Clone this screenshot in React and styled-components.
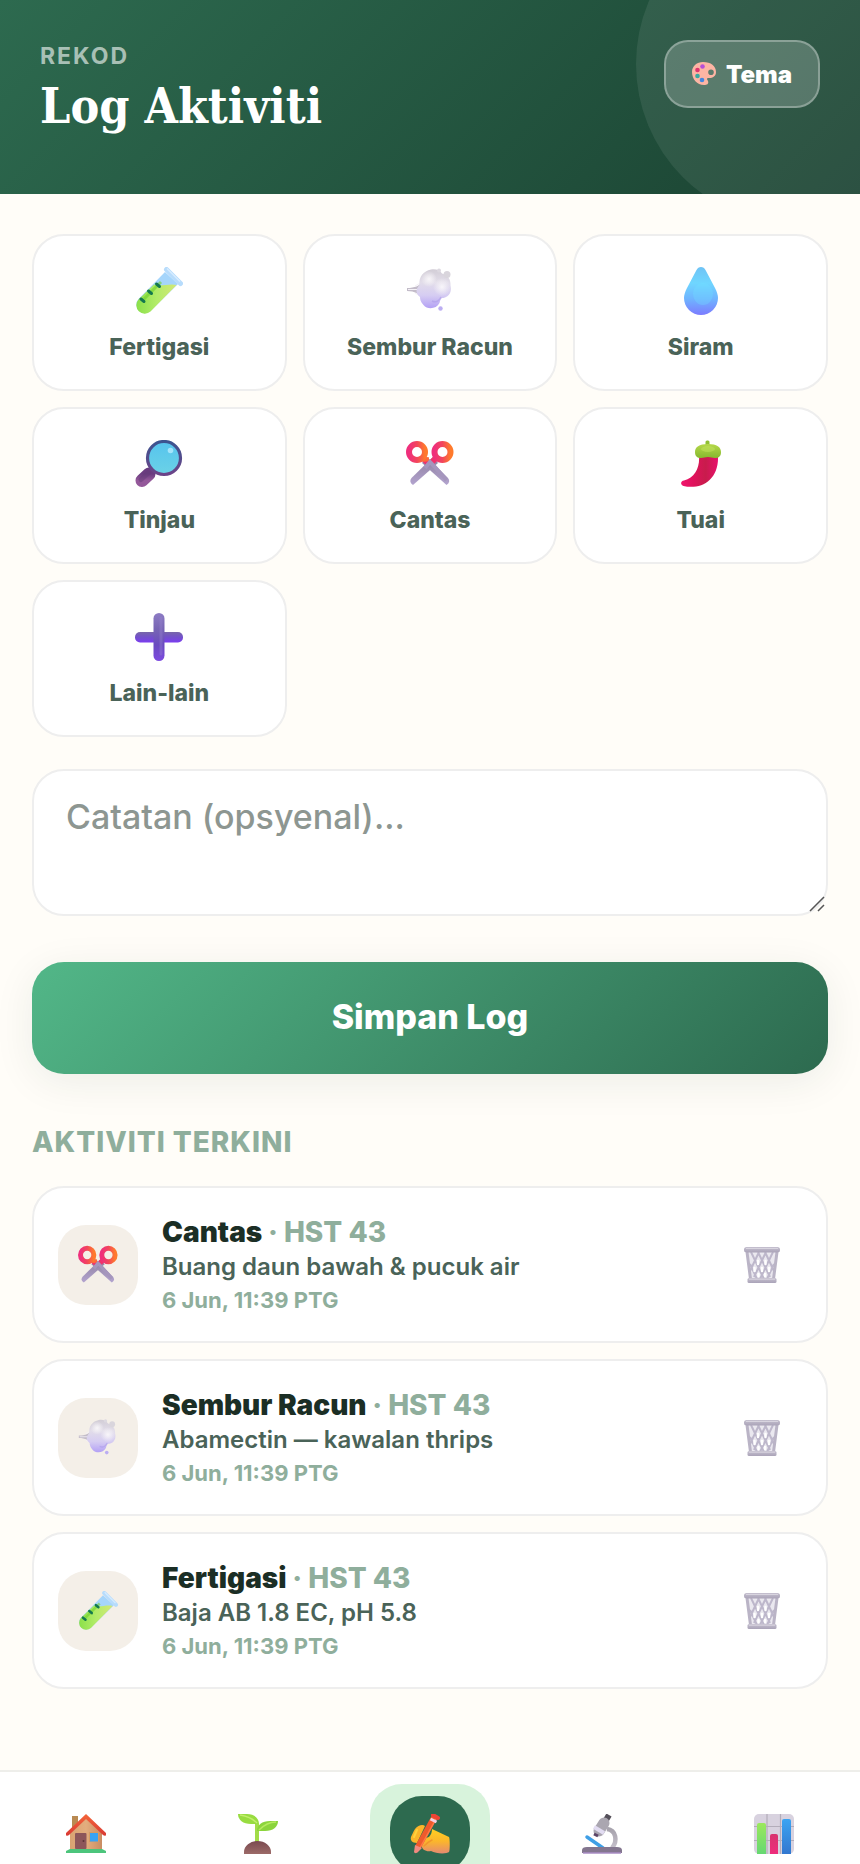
import React, { useState } from "react";
import styled, { createGlobalStyle } from "styled-components";

const GlobalStyle = createGlobalStyle`
  * {
    box-sizing: border-box;
  }
  body {
    margin: 0;
    background: #fffdf8;
    color: #1b2e25;
    font-family: "Inter", "Liberation Sans", sans-serif;
  }
  button,
  textarea {
    font-family: inherit;
  }
  button {
    cursor: pointer;
  }
`;

const Page = styled.div`
  display: flex;
  flex-direction: column;
  min-height: 100vh;
`;

const Header = styled.header`
  position: relative;
  overflow: hidden;
  display: flex;
  justify-content: space-between;
  align-items: flex-start;
  padding: 40px 40px 54px;
  background: linear-gradient(135deg, #2d6a4f, #1b4332);
  color: #ffffff;

  &::before {
    content: "";
    position: absolute;
    top: -96px;
    right: -96px;
    width: 320px;
    height: 320px;
    border-radius: 50%;
    background: rgba(255, 255, 255, 0.08);
  }
`;

const Eyebrow = styled.div`
  font-size: 23px;
  line-height: 32px;
  font-weight: 700;
  letter-spacing: 2px;
  text-transform: uppercase;
  color: rgba(255, 255, 255, 0.6);
`;

const Title = styled.h1`
  margin: 0;
  font-family: "DejaVu Serif Condensed", "DejaVu Serif", serif;
  font-size: 48px;
  line-height: 68px;
  font-weight: 700;
`;

const ThemeButton = styled.button`
  position: relative;
  display: flex;
  align-items: center;
  gap: 10px;
  height: 68px;
  padding: 0 26px;
  border: 2px solid rgba(255, 255, 255, 0.3);
  border-radius: 24px;
  background: rgba(255, 255, 255, 0.2);
  color: #ffffff;
  font-size: 24px;
  font-weight: 900;
`;

const Main = styled.main`
  flex: 1;
  padding: 40px 32px;
`;

const ActivityGrid = styled.div`
  display: grid;
  grid-template-columns: repeat(3, 1fr);
  gap: 16px;
`;

const ActivityButton = styled.button`
  display: flex;
  flex-direction: column;
  align-items: center;
  gap: 18px;
  padding: 31px 16px 28px;
  border: 2px solid ${(props) => (props.$active ? "#2d6a4f" : "#eeeeee")};
  border-radius: 32px;
  background: #ffffff;
  color: #4a6358;
  font-size: 23px;
  line-height: 28px;
  font-weight: 800;
`;

const NoteBox = styled.div`
  position: relative;
  margin-top: 32px;

  & svg {
    position: absolute;
    right: 3px;
    bottom: 4px;
  }
`;

const Note = styled.textarea`
  display: block;
  width: 100%;
  height: 147px;
  padding: 24px 32px;
  border: 2px solid #eeeeee;
  border-radius: 32px;
  background: #ffffff;
  color: #1b2e25;
  font-size: 34px;
  line-height: 44px;
  font-weight: 500;
  resize: none;
  outline: none;

  &::placeholder {
    color: #8d9691;
    opacity: 1;
  }
`;

const SaveButton = styled.button`
  display: block;
  width: 100%;
  height: 112px;
  margin-top: 46px;
  padding: 0 32px 4px;
  border: none;
  border-radius: 32px;
  background: linear-gradient(135deg, #52b788, #2d6a4f);
  box-shadow: 0 8px 40px rgba(27, 46, 37, 0.08);
  color: #ffffff;
  font-size: 34px;
  font-weight: 800;
`;

const SectionTitle = styled.h2`
  margin: 48px 0 24px;
  font-size: 28px;
  line-height: 40px;
  font-weight: 800;
  letter-spacing: 1px;
  text-transform: uppercase;
  color: #8fae9c;
`;

const LogList = styled.ul`
  display: flex;
  flex-direction: column;
  gap: 16px;
  margin: 0;
  padding: 0;
  list-style: none;
`;

const LogCard = styled.li`
  display: flex;
  align-items: center;
  gap: 24px;
  min-height: 157px;
  padding: 16px 24px;
  border: 2px solid #eeeeee;
  border-radius: 32px;
  background: #ffffff;
`;

const LogIcon = styled.div`
  display: flex;
  align-items: center;
  justify-content: center;
  flex-shrink: 0;
  width: 80px;
  height: 80px;
  border-radius: 28px;
  background: #f4efe8;
`;

const LogText = styled.div`
  flex: 1;
  min-width: 0;
`;

const LogName = styled.div`
  font-size: 28px;
  line-height: 36px;
  font-weight: 900;

  & span {
    color: #8fae9c;
    font-weight: 800;
  }
`;

const LogNote = styled.div`
  font-size: 24px;
  line-height: 34px;
  font-weight: 600;
  color: #4a6358;
`;

const LogTime = styled.div`
  font-size: 22px;
  line-height: 32px;
  font-weight: 700;
  color: #8fae9c;
`;

const DeleteButton = styled.button`
  display: flex;
  padding: 22px;
  border: none;
  background: none;
`;

const Nav = styled.nav`
  display: flex;
  flex-shrink: 0;
  height: 94px;
  overflow: hidden;
  padding-top: 12px;
  border-top: 2px solid #eeeeea;
  background: #ffffff;
`;

const NavSlot = styled.div`
  flex: 1;
  display: flex;
  justify-content: center;
  align-items: flex-start;
`;

const NavItem = styled.a`
  padding: 12px 20px 24px;
  border-radius: 32px;
  background: ${(props) => (props.$active ? "#d8f3dc" : "transparent")};
`;

const NavTile = styled.span`
  display: flex;
  align-items: center;
  justify-content: center;
  width: 80px;
  height: 76px;
  border-radius: 32px;
  background: ${(props) => (props.$active ? "#2d6a4f" : "transparent")};
`;

const HiddenSvg = styled.svg`
  position: absolute;
  width: 0;
  height: 0;
`;

const Stops = ({ colors }) =>
  colors.map((color, i) => (
    <stop key={i} offset={i / (colors.length - 1)} stopColor={color} />
  ));

// gradients shared by all the icons
const vertical = {
  gDrop: ["#6fc3f5", "#6fd6ff", "#6fb4ff", "#7c7cff"],
  gPuff: ["#d2cdd6", "#e2dde9", "#d6cdf2", "#b3a0f5"],
  gLens: ["#56c4ee", "#6bd2e6"],
  gRim: ["#3c5490", "#6c4388"],
  gHandle: ["#6b3c80", "#94589a"],
  gBlade: ["#8d7f9e", "#b3a4cf"],
  gStem: ["#b5d84a", "#86b82e"],
  gPlusV: ["#8d7cc4", "#7765b4", "#6a4ac0", "#7d4be0"],
  gPlusH: ["#7766a8", "#7350cc", "#7b3cf0"],
  gBasket: ["#c5c0cf", "#aaa3b8"],
  gRoof: ["#f4663a", "#d93a34"],
  gSoil: ["#7a4a50", "#9c6a68"],
  gArm: ["#a7a3ad", "#c5c0cb"],
  gBlue: ["#3ba4f2", "#3277cf"],
  gGreen: ["#9be85c", "#66d873"],
  gPink: ["#d8346f", "#ee2c7c"],
  gHand: ["#ffcf22", "#fbb62b", "#e58a72"],
};

const horizontal = {
  gRing: ["#ef2f7c", "#f2465c", "#ff7a2c"],
  gWall: ["#d9a272", "#e3ad7e", "#c98d63"],
  gLiquid: ["#8be04a", "#b2ec68", "#d3e876"],
  gChili: ["#f0146c", "#e0125c", "#c81c4c", "#e8106c"],
};

function IconDefs() {
  return (
    <HiddenSvg aria-hidden="true">
      <defs>
        {Object.keys(vertical).map((id) => (
          <linearGradient key={id} id={id} x1="0" y1="0" x2="0" y2="1">
            <Stops colors={vertical[id]} />
          </linearGradient>
        ))}
        {Object.keys(horizontal).map((id) => (
          <linearGradient key={id} id={id} x1="0" y1="0" x2="1" y2="0">
            <Stops colors={horizontal[id]} />
          </linearGradient>
        ))}
        <radialGradient id="gShine">
          <stop offset="0" stopColor="#fbf9fb" stopOpacity=".9" />
          <stop offset="1" stopColor="#fbf9fb" stopOpacity="0" />
        </radialGradient>
      </defs>
    </HiddenSvg>
  );
}

const Icon = ({ size = 48, box = 48, children }) => (
  <svg
    width={size}
    height={size}
    viewBox={`0 0 ${box} ${box}`}
    fill="none"
    aria-hidden="true"
  >
    {children}
  </svg>
);

const FlaskIcon = (props) => (
  <Icon {...props}>
    <path
      d="M30 5 3.500 32a8.500 8.500 0 0 0 12 12L43 17Z"
      fill="#a5d5fb"
    />
    <path
      d="M19 17.500 3.500 32.500a8.500 8.500 0 0 0 12 12L41.500 18c-7-2-15 2-22.500-.5Z"
      fill="url(#gLiquid)"
    />
    <path d="M26 15 9 32" stroke="#6fd02c" strokeWidth="3" opacity=".6" />
    <path
      d="M31.500 2.500 45.500 16.500"
      stroke="#b7dcfc"
      strokeWidth="5"
      strokeLinecap="round"
    />
    <path d="m32 1.500 13 13" stroke="#d6ecff" strokeWidth="1.500" />
    <path
      d="m21.500 17 3 2.500M13.500 24l3 2.500M6 32l3 2.500"
      stroke="#14784f"
      strokeWidth="3"
      strokeLinecap="round"
    />
  </Icon>
);

const PuffIcon = (props) => (
  <Icon {...props}>
    <path
      d="M1 21c8 0 12-2 16-7l5 9-5 9c-4-5-8-8-16-8Z"
      fill="#c3bcc9"
    />
    <path d="M2 22.500h14M9 19l7-4M9 26l7 4" stroke="#f4f1f6" />
    <path
      d="M25 2.500c5-1 9 1 11 4 6 2 9 6 8.500 12 1.500 6-1 11-7 12.500-3 0-3 2-4 5-3 6-12 7-16 2-3-3-3.500-6-3.500-8-5-4-4-8-.5-12-1-8 4-14 11.500-15.500Z"
      fill="url(#gPuff)"
    />
    <circle cx="23" cy="12" r="8" fill="url(#gShine)" />
    <circle cx="36" cy="20" r="9" fill="url(#gShine)" />
    <path
      d="M26 34c4 2 7 0 9-4"
      stroke="#a795e8"
      strokeWidth="1.500"
      opacity=".5"
    />
    <circle cx="41" cy="7.500" r="3.500" fill="#d9d5dc" />
    <circle cx="33" cy="3.500" r="2" fill="#dcd8e0" />
    <circle cx="34.500" cy="41.500" r="2.200" fill="#bcaef2" />
  </Icon>
);

const DropIcon = (props) => (
  <Icon {...props}>
    <path
      d="M24 0c2 0 3.500 1 4.500 3L38 21c2 4 3 7 3 10a17 17 0 0 1-34 0c0-3 1-6 3-10l9.500-18C20.500 1 22 0 24 0Z"
      fill="url(#gDrop)"
    />
    <ellipse cx="26" cy="27" rx="10" ry="11" fill="#6fe0ff" opacity=".3" />
  </Icon>
);

const MagnifierIcon = (props) => (
  <Icon {...props}>
    <path
      d="M14 34 7 40.500"
      stroke="url(#gHandle)"
      strokeWidth="13"
      strokeLinecap="round"
    />
    <path
      d="M13 33 6 39.500"
      stroke="#643a78"
      strokeWidth="5"
      strokeLinecap="round"
      opacity=".5"
    />
    <circle
      cx="29"
      cy="18"
      r="16.500"
      fill="url(#gLens)"
      stroke="url(#gRim)"
      strokeWidth="3.200"
    />
    <circle cx="35.500" cy="10.500" r="2.800" fill="#a4e4fb" />
  </Icon>
);

const ScissorsIcon = (props) => (
  <Icon {...props}>
    <path
      d="M27 17 5.500 38c-2 2.500-1.500 5 1.500 7L32 23Z"
      fill="url(#gBlade)"
    />
    <path d="m21 17 21 21c2 2.500 1.500 5-1.500 7L16 23Z" fill="url(#gBlade)" />
    <path
      d="m17 18 5 5M30 18l-5 5"
      stroke="#f0326c"
      strokeWidth="6"
    />
    <path d="m17 20 6-1" stroke="#ff6a38" strokeWidth="4" />
    <path
      d="M19 28 24 22l4.500 4.500L40.500 40"
      stroke="#a596bd"
      strokeWidth="4"
    />
    <circle cx="11" cy="12" r="8" stroke="url(#gRing)" strokeWidth="6" />
    <circle cx="36.500" cy="12" r="8" stroke="url(#gRing)" strokeWidth="6" />
  </Icon>
);

const ChiliIcon = (props) => (
  <Icon {...props}>
    <path
      d="M22 16c1 11-4 22-15 24.500C3.500 41 3 45 6.500 46 24 50 42 40 41 16Z"
      fill="url(#gChili)"
    />
    <path d="M28.500 7V2c0-2 4-2 4 0v5Z" fill="#8fbf33" />
    <path
      d="M18 12c0-5 4-8 13-8s13 3 13 8c0 4-2 6-6 6-3 0-4-1-7-1s-4 1-7 1c-4 0-6-2-6-6Z"
      fill="url(#gStem)"
    />
    <ellipse cx="31" cy="9" rx="7" ry="3" fill="#c4e35e" opacity=".5" />
  </Icon>
);

const PlusIcon = (props) => (
  <Icon {...props}>
    <rect x="0" y="19" width="48" height="10.500" rx="5" fill="url(#gPlusH)" />
    <rect x="18.500" y="0" width="11" height="48" rx="5.500" fill="url(#gPlusV)" />
    <path
      d="M26 5v36"
      stroke="#9a88d0"
      strokeWidth="3"
      strokeLinecap="round"
      opacity=".35"
    />
  </Icon>
);

const PaletteIcon = () => (
  <Icon size={24} box={24}>
    <path
      fillRule="evenodd"
      d="M11 0c8 0 13 4 13 10 0 4-3 6-7 6-3 0-2 1-1 3 1 3-1 4-4 4C5 23 0 17 0 10 0 4 5 0 11 0Zm8 7.500a2.800 2.800 0 1 0 0 5.600 2.800 2.800 0 0 0 0-5.600Z"
      fill="#fdb5a4"
    />
    <circle cx="5.500" cy="8" r="2.300" fill="#e0336e" />
    <circle cx="10.500" cy="4.500" r="2.300" fill="#b64fd8" />
    <circle cx="5.500" cy="14" r="2.300" fill="#3aa9a0" />
    <circle cx="10" cy="18" r="2.300" fill="#4587e0" />
  </Icon>
);

const BasketIcon = () => (
  <Icon size={36} box={36}>
    <path d="M3 5h30l-3 27H6Z" fill="#d9d5e2" opacity=".55" />
    <path
      d="m7 5 13 27M14 5l12 25M21 5l9 19M6 17l7 15M29 5 16 32M22 5 10 30M15 5 6 24M30 17l-7 15"
      stroke="#bdb7cb"
      strokeWidth="2"
    />
    <path
      d="M14 14v3M21.500 14v3M10.500 21v3M18 21v3M25 21v3M14.500 27v2M21 27v2"
      stroke="#ffffff"
      strokeWidth="2.400"
      strokeLinecap="round"
    />
    <path d="M3 5 6.500 32M33 5l-3.500 27" stroke="#bab4c6" strokeWidth="3" />
    <rect x="0" y="0" width="36" height="5.500" rx="2.500" fill="url(#gBasket)" />
    <path d="M2 1.500h32" stroke="#d8d4df" />
    <rect x="3.500" y="31" width="29" height="5" rx="1.500" fill="url(#gBasket)" />
    <path d="M5 32.200h26" stroke="#d8d4df" />
  </Icon>
);

const HomeIcon = () => (
  <Icon size={40} box={40}>
    <rect x="6" y="2" width="6" height="15" fill="#b98a52" />
    <path d="M4 18 20 3l16 15v18H4Z" fill="url(#gWall)" />
    <path
      d="M20 0 0 19v2c0 1 2 1 3 0L20 5l17 16c1 1 3 1 3 0v-2Z"
      fill="url(#gRoof)"
    />
    <rect x="9" y="19" width="11.500" height="16" rx="1" fill="#8d565a" />
    <circle cx="17.500" cy="27" r="1" fill="#5c3238" />
    <rect x="23" y="18" width="10" height="10" fill="#d79a62" />
    <rect x="24" y="19" width="8" height="8.500" fill="#38a3f5" />
    <path d="M0 39v-2l4-2h32l4 2v2Z" fill="#4cc57c" />
  </Icon>
);

const SeedlingIcon = () => (
  <Icon size={40} box={40}>
    <path
      d="M19 28V10"
      stroke="#a2dc48"
      strokeWidth="4"
    />
    <path d="M0 0h9c7 0 12 4 12 10h-8C5 10 0 6 0 0Z" fill="#98dc40" />
    <path d="M2 1c7 1 12 3 17 8" stroke="#c1ee6c" strokeWidth="1.500" />
    <path d="M40 7h-8c-8 0-13 4-13 10h8c8 0 13-4 13-10Z" fill="#8bd43c" />
    <path d="M38 8c-7 0-12 3-17 8" stroke="#b6ea60" strokeWidth="1.500" />
    <path d="M6 40v-2a13.500 11 0 0 1 27 0v2Z" fill="url(#gSoil)" />
  </Icon>
);

const WritingIcon = () => (
  <Icon size={40} box={40}>
    <path
      d="M5 15c3-4 8-5 10-3L7 29c-5 0-7-3-6-6 1-2 2-5 4-8Z"
      fill="#fbb52a"
    />
    <path d="M7 16 4 23" stroke="#ffd23c" strokeWidth="2" strokeLinecap="round" />
    <path
      d="m22 15 17 8c1 1 1 14 0 15-2 2-13 2-18-1-4 1-10-1-9-6-1-4 5-8 7-8 2-2 3-5 3-8Z"
      fill="url(#gHand)"
    />
    <path
      d="M22 26c-4 2-5 3-8 6"
      stroke="#f0982c"
      strokeWidth="1.500"
      strokeLinecap="round"
    />
    <path d="M25 2 8 33" stroke="#ef5a2c" strokeWidth="6" />
    <path d="M27 3 10 34" stroke="#ff7a45" strokeWidth="1.500" />
    <path d="m5 31-1 7c1 2 3 1 4 0l4-4Z" fill="#f08a80" />
    <path d="m20.500 5 6 3" stroke="#f3cfe2" strokeWidth="3" />
    <path d="m23 1 5 3" stroke="#ee4335" strokeWidth="4" strokeLinecap="round" />
  </Icon>
);

const MicroscopeIcon = () => (
  <Icon size={40} box={40}>
    <path
      d="M25 15c9 1 11 12 5 19"
      stroke="url(#gArm)"
      strokeWidth="4.500"
    />
    <path
      d="m5 23 16 11"
      stroke="#3f9fe6"
      strokeWidth="3.500"
      strokeLinecap="round"
    />
    <path
      d="m27 1-3 5"
      stroke="#55505a"
      strokeWidth="6"
    />
    <path
      d="m22 9-5 8"
      stroke="#aaa6b0"
      strokeWidth="11"
      strokeLinecap="round"
    />
    <path d="m12 13 10 6" stroke="#e2dcf2" strokeWidth="4" />
    <path d="m12 20 4 2" stroke="#5d4668" strokeWidth="3" />
    <path d="M0 39v-3c0-2 2-3 5-3h30c3 0 5 1 5 3v3Z" fill="#83768f" />
    <path d="M1 39h38" stroke="#a88cc4" strokeWidth="1.500" />
  </Icon>
);

const ChartIcon = () => (
  <Icon size={40} box={40}>
    <rect width="40" height="40" rx="5" fill="#d8d2df" />
    <path
      d="M13 0v40M26.500 0v40M0 12.500h40M0 26.500h40"
      stroke="#b3adba"
      strokeWidth="1.200"
    />
    <path d="M3 40V11q0-2 2-2h5q2 0 2 2v29Z" fill="url(#gGreen)" />
    <path d="M16 40V22q0-2 2-2h4q2 0 2 2v18Z" fill="url(#gPink)" />
    <path d="M28 40V7q0-2 2-2h5q2 0 2 2v33Z" fill="url(#gBlue)" />
  </Icon>
);

const activities = [
  { name: "Fertigasi", icon: FlaskIcon },
  { name: "Sembur Racun", icon: PuffIcon },
  { name: "Siram", icon: DropIcon },
  { name: "Tinjau", icon: MagnifierIcon },
  { name: "Cantas", icon: ScissorsIcon },
  { name: "Tuai", icon: ChiliIcon },
  { name: "Lain-lain", icon: PlusIcon },
];

const logs = [
  {
    name: "Cantas",
    day: "HST 43",
    note: "Buang daun bawah & pucuk air",
    time: "6 Jun, 11:39 PTG",
    icon: ScissorsIcon,
  },
  {
    name: "Sembur Racun",
    day: "HST 43",
    note: "Abamectin — kawalan thrips",
    time: "6 Jun, 11:39 PTG",
    icon: PuffIcon,
  },
  {
    name: "Fertigasi",
    day: "HST 43",
    note: "Baja AB 1.8 EC, pH 5.8",
    time: "6 Jun, 11:39 PTG",
    icon: FlaskIcon,
  },
];

const navItems = [
  { id: "utama", icon: HomeIcon },
  { id: "tanaman", icon: SeedlingIcon },
  { id: "log", icon: WritingIcon },
  { id: "diagnosis", icon: MicroscopeIcon },
  { id: "laporan", icon: ChartIcon },
];

function App() {
  const [selected, setSelected] = useState(null);
  const [note, setNote] = useState("");

  return (
    <Page>
      <GlobalStyle />
      <IconDefs />
      <Header>
        <div>
          <Eyebrow>Rekod</Eyebrow>
          <Title>Log Aktiviti</Title>
        </div>
        <ThemeButton type="button">
          <PaletteIcon />
          Tema
        </ThemeButton>
      </Header>
      <Main>
        <ActivityGrid>
          {activities.map(({ name, icon: ActivityIcon }) => (
            <ActivityButton
              key={name}
              type="button"
              $active={selected === name}
              onClick={() => setSelected(name)}
            >
              <ActivityIcon />
              {name}
            </ActivityButton>
          ))}
        </ActivityGrid>
        <NoteBox>
          <Note
            aria-label="Catatan"
            placeholder="Catatan (opsyenal)..."
            value={note}
            onChange={(e) => setNote(e.target.value)}
          />
          <svg width="16" height="16" viewBox="0 0 16 16" aria-hidden="true">
            <path d="M1 15 15 1M9 15l6-6" stroke="#555555" strokeWidth="1.500" />
          </svg>
        </NoteBox>
        <SaveButton type="button">Simpan Log</SaveButton>
        <SectionTitle>Aktiviti Terkini</SectionTitle>
        <LogList>
          {logs.map(({ name, day, note: text, time, icon: ActivityIcon }) => (
            <LogCard key={name}>
              <LogIcon>
                <ActivityIcon size={40} />
              </LogIcon>
              <LogText>
                <LogName>
                  {name} <span>· {day}</span>
                </LogName>
                <LogNote>{text}</LogNote>
                <LogTime>{time}</LogTime>
              </LogText>
              <DeleteButton type="button" aria-label={`Padam ${name}`}>
                <BasketIcon />
              </DeleteButton>
            </LogCard>
          ))}
        </LogList>
      </Main>
      <Nav>
        {navItems.map(({ id, icon: NavIcon }) => (
          <NavSlot key={id}>
            <NavItem href={`#${id}`} aria-label={id} $active={id === "log"}>
              <NavTile $active={id === "log"}>
                <NavIcon />
              </NavTile>
            </NavItem>
          </NavSlot>
        ))}
      </Nav>
    </Page>
  );
}

export default App;
